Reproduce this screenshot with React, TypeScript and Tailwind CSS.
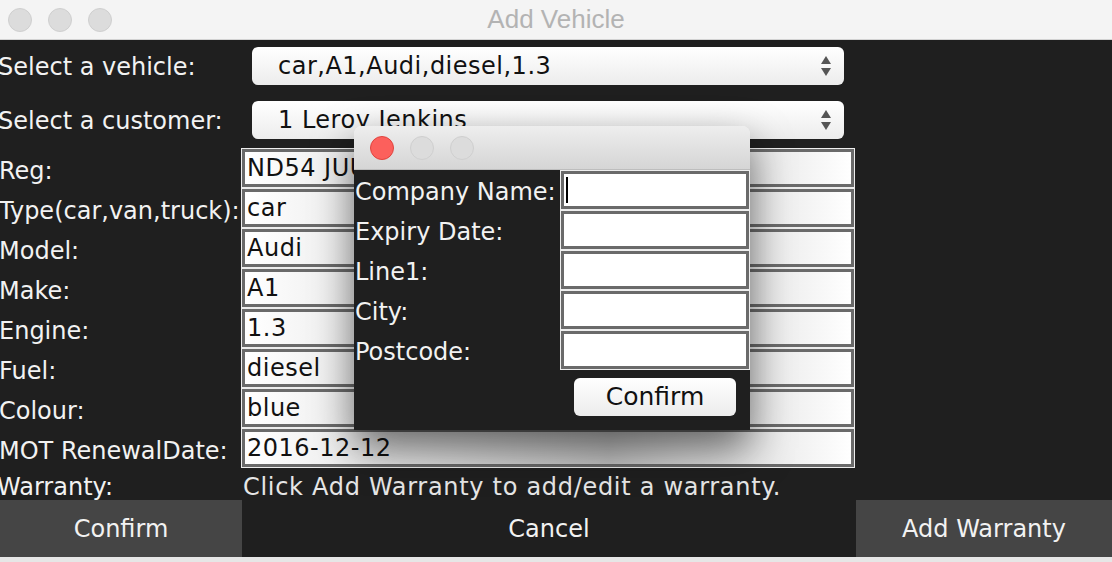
import React from 'react';

const FONT = { fontFamily: '"DejaVu Sans", "Noto Sans", sans-serif' };

function Lights({ red = false }: { red?: boolean }) {
  return (
    <div className="flex items-center gap-[16px]">
      <span
        className={`block w-[24px] h-[24px] rounded-full border ${
          red ? 'bg-[#fc605c] border-[#e0443e]' : 'bg-[#dcdcdc] border-[#cfcfcf]'
        }`}
      />
      <span className="block w-[24px] h-[24px] rounded-full bg-[#dcdcdc] border border-[#cfcfcf]" />
      <span className="block w-[24px] h-[24px] rounded-full bg-[#dcdcdc] border border-[#cfcfcf]" />
    </div>
  );
}

function Combo({ value }: { value: string }) {
  return (
    <div className="flex items-center h-[38px] w-[592px] rounded-[6px] bg-gradient-to-b from-white to-[#ececec] pl-[26px] pr-[12px]">
      <span className="flex-1 text-[24px] tracking-[0.5px] text-[#111] whitespace-nowrap overflow-hidden">{value}</span>
      <svg width="12" height="22" viewBox="0 0 12 22">
        <polygon points="6,1 11,9 1,9" fill="#555" />
        <polygon points="1,13 11,13 6,21" fill="#555" />
      </svg>
    </div>
  );
}

function Field({ value }: { value: string }) {
  return (
    <div className="h-[40px] w-[614px] border border-[#ededed]">
      <div className="h-full border-[3px] border-[#6a6a6a] bg-[linear-gradient(90deg,#ffffff_0%,#c2c2c2_60%,#ffffff_100%)] flex items-center pl-[2px] overflow-hidden">
        <span className="text-[24px] tracking-[0.5px] text-[#111] whitespace-nowrap">{value}</span>
      </div>
    </div>
  );
}

function Label({ text }: { text: string }) {
  return <span className="text-[24px] text-[#f2f2f2] whitespace-nowrap">{text}</span>;
}

const rows: [string, string][] = [
  ['Reg:', 'ND54 JUU'],
  ['Type(car,van,truck):', 'car'],
  ['Model:', 'Audi'],
  ['Make:', 'A1'],
  ['Engine:', '1.3'],
  ['Fuel:', 'diesel'],
  ['Colour:', 'blue'],
  ['MOT RenewalDate:', '2016-12-12'],
];

const dialogRows = ['Company Name:', 'Expiry Date:', 'Line1:', 'City:', 'Postcode:'];

export default function App() {
  return (
    <div className="relative w-[1112px] h-[562px] overflow-hidden bg-[#e6e6e6]" style={FONT}>
      {/* title bar */}
      <div className="relative h-[40px] bg-[#f4f4f4] border-b border-[#d2d2d2] flex items-center pl-[8px]">
        <Lights />
        <div
          className="absolute inset-0 flex items-center justify-center text-[26px] text-[#b3b3b3]"
          style={{ fontFamily: '"Liberation Sans", Arial, sans-serif' }}
        >
          Add Vehicle
        </div>
      </div>

      {/* body */}
      <div className="bg-[#1f1f1f] flex flex-col">
        <div className="flex items-start h-[54px] pt-[7px] -ml-[2px]">
          <div className="w-[254px] h-[38px] flex items-center pt-[2px]">
            <Label text="Select a vehicle:" />
          </div>
          <Combo value="car,A1,Audi,diesel,1.3" />
        </div>
        <div className="flex items-start h-[54px] pt-[7px] -ml-[2px]">
          <div className="w-[254px] h-[38px] flex items-center pt-[2px]">
            <Label text="Select a customer:" />
          </div>
          <Combo value="1 Leroy Jenkins" />
        </div>
        <div className="flex flex-col">
          {rows.map(([l, v]) => (
            <div key={l} className="flex items-center h-[40px]">
              <div className="w-[242px] -ml-[1px] pt-[6px]">
                <Label text={l} />
              </div>
              <Field value={v} />
            </div>
          ))}
          <div className="flex items-center h-[32px] pt-[6px]">
            <div className="w-[246px] -ml-[3px]">
              <Label text="Warranty:" />
            </div>
            <span className="text-[24px] tracking-[0.7px] text-[#e6e6e6] whitespace-nowrap">
              Click Add Warranty to add/edit a warranty.
            </span>
          </div>
        </div>
        <div className="flex h-[57px]">
          <div className="w-[242px] bg-[#454545] flex items-center justify-center text-[24px] text-[#f2f2f2]">
            Confirm
          </div>
          <div className="w-[614px] flex items-center justify-center text-[24px] text-[#f2f2f2]">Cancel</div>
          <div className="flex-1 bg-[#454545] flex items-center justify-center text-[24px] text-[#f2f2f2]">
            Add Warranty
          </div>
        </div>
      </div>

      {/* warranty dialog */}
      <div className="absolute left-[354px] top-[126px] w-[396px] h-[304px] rounded-t-[8px] shadow-[0_18px_40px_rgba(0,0,0,0.55)]">
        <div className="h-[44px] rounded-t-[8px] bg-gradient-to-b from-[#eeeeee] to-[#d5d5d5] flex items-center pl-[16px] border-b border-[#bdbdbd]">
          <Lights red />
        </div>
        <div className="h-[260px] bg-[#1f1f1f] flex flex-col">
          {dialogRows.map((l, i) => (
            <div key={l} className="flex items-center h-[40px]">
              <div className="w-[206px] pl-[1px] pt-[4px]">
                <Label text={l} />
              </div>
              <div className="h-[40px] w-[190px] border border-[#ededed]">
                <div className="h-full border-[3px] border-[#6a6a6a] bg-white flex items-center pl-[2px]">
                  {i === 0 && <span className="block w-[2px] h-[26px] bg-black" />}
                </div>
              </div>
            </div>
          ))}
          <div className="flex-1 flex items-start justify-end pr-[14px] pt-[8px]">
            <div className="w-[162px] h-[38px] rounded-[6px] bg-gradient-to-b from-white to-[#ececec] flex items-center justify-center text-[25px] text-[#111]">
              Confirm
            </div>
          </div>
        </div>
      </div>
    </div>
  );
}
